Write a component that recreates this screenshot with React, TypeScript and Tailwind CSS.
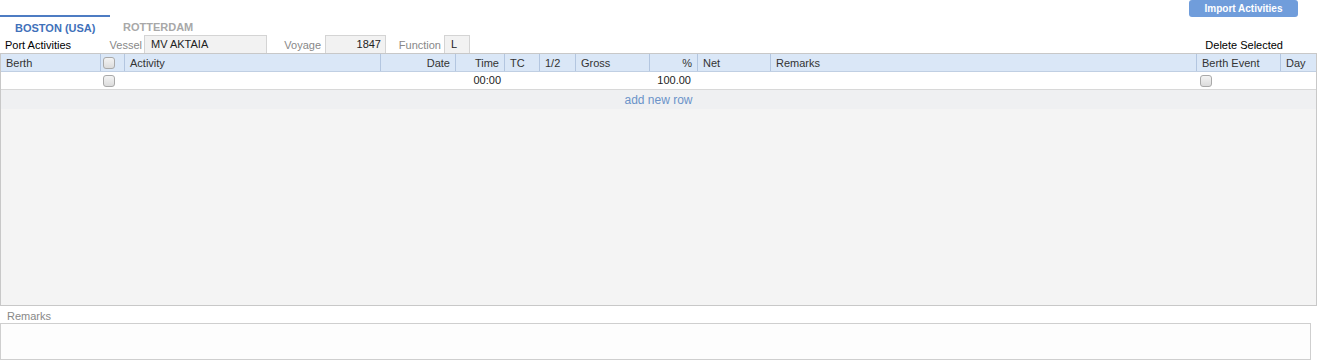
import React from "react";

const columns = [
  { label: "Berth", align: "left" },
  { label: "", align: "left", checkbox: true },
  { label: "Activity", align: "left" },
  { label: "Date", align: "right" },
  { label: "Time", align: "right" },
  { label: "TC", align: "left" },
  { label: "1/2", align: "left" },
  { label: "Gross", align: "left" },
  { label: "%", align: "right" },
  { label: "Net", align: "left" },
  { label: "Remarks", align: "left" },
  { label: "Berth Event", align: "left" },
  { label: "Day", align: "left" },
];

const grid =
  "grid grid-cols-[100px_24px_256px_75px_49px_35px_36px_74px_48px_73px_426px_84px_1fr]";

function Box() {
  return (
    <span className="block h-[12px] w-[12px] rounded-[3px] border border-[#a9a9a9] bg-gradient-to-b from-[#f4f4f4] to-[#dcdcdc]" />
  );
}

export default function App() {
  return (
    <div className="h-[361px] w-[1317px] overflow-hidden bg-white font-['Liberation_Sans',Arial,sans-serif] text-[11px] text-[#222]">
      {/* tabs */}
      <div className="flex h-[35px] items-start">
        <div className="flex">
          <div className="flex w-[110px] flex-col">
            <div className="mt-[15px] h-[2px] bg-[#4d7cc3]" />
            <div className="pl-[15px] pt-[5px] text-[11px] font-bold leading-[13px] text-[#3f71ba]">
              BOSTON (USA)
            </div>
          </div>
          <div className="pl-[13px] pt-[21px] text-[11px] font-bold leading-[13px] text-[#a8a8a8]">
            ROTTERDAM
          </div>
        </div>
        <div className="ml-auto mr-[19px]">
          <button className="h-[17px] w-[109px] rounded-[3px] bg-[#709ddb] text-[10px] font-bold leading-[17px] text-white">
            Import Activities
          </button>
        </div>
      </div>

      {/* header fields */}
      <div className="flex h-[18px] items-stretch">
        <div className="w-[109px] pl-[5px] pt-[4px] leading-[13px] text-black">
          Port Activities
        </div>
        <div className="w-[35px] pr-[2px] pt-[4px] text-right leading-[13px] text-[#888]">
          Vessel
        </div>
        <div className="w-[123px] border border-b-0 border-[#d4d4d4] bg-[#f2f2f2] pl-[6px] pt-[2px] leading-[13px] text-[#222]">
          MV AKTAIA
        </div>
        <div className="w-[58px] pr-[4px] pt-[4px] text-right leading-[13px] text-[#888]">
          Voyage
        </div>
        <div className="w-[61px] border border-b-0 border-[#d4d4d4] bg-[#f2f2f2] pr-[4px] pt-[2px] text-right leading-[13px]">
          1847
        </div>
        <div className="w-[58px] pr-[3px] pt-[4px] text-right leading-[13px] text-[#888]">
          Function
        </div>
        <div className="w-[26px] border border-b-0 border-[#d4d4d4] bg-[#f2f2f2] pl-[6px] pt-[2px] leading-[13px]">
          L
        </div>
        <div className="ml-auto mr-[34px] pt-[4px] leading-[13px] text-black">
          Delete Selected
        </div>
      </div>

      {/* table */}
      <div className="flex h-[253px] flex-col border border-[#c8c8c8] bg-[#f4f4f4]">
        <div className={`${grid} h-[18px] border-b border-[#c0cfe3] bg-[#dae7f7]`}>
          {columns.map((c, i) => (
            <div
              key={i}
              className={`flex items-center border-r border-[#b3c6e0] pt-[1px] leading-[13px] text-[#333] last:border-r-0 ${
                c.checkbox ? "pl-[2px]" : "px-[5px]"
              } ${c.align === "right" ? "justify-end" : ""}`}
            >
              {c.checkbox ? <Box /> : c.label}
            </div>
          ))}
        </div>
        <div className={`${grid} h-[18px] border-b border-[#d8d8d8] bg-white leading-[13px]`}>
          <div />
          <div className="flex items-center pl-[2px]">
            <Box />
          </div>
          <div />
          <div />
          <div className="flex items-center justify-end pr-[4px]">00:00</div>
          <div />
          <div />
          <div />
          <div className="flex items-center justify-end pr-[7px]">100.00</div>
          <div />
          <div />
          <div className="flex items-center pl-[3px]">
            <Box />
          </div>
          <div />
        </div>
        <div className="flex h-[19px] items-center justify-center bg-[#eff0f2] text-[12px] text-[#6b93c9]">
          add new row
        </div>
      </div>

      {/* remarks */}
      <div className="pl-[7px] pt-[3px] text-[11px] leading-[14px] text-[#888]">Remarks</div>
      <div className="h-[37px] w-[1311px] border border-[#cfcfcf] bg-[#fdfdfd]" />
    </div>
  );
}
